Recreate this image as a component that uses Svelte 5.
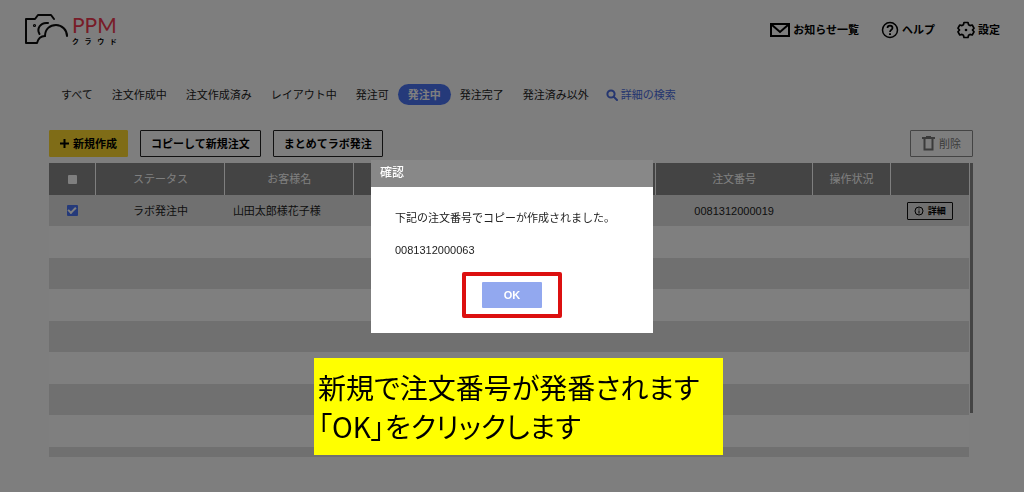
<script>
  const tabs = ['すべて', '注文作成中', '注文作成済み', 'レイアウト中', '発注可', '発注中', '発注完了', '発注済み以外'];
  let active = $state('発注中');
  let allChecked = $state(false);
  let checked = $state(true);
  let open = $state(true);
  const emptyRows = [1, 2, 3, 4, 5, 6, 7, 8];
</script>

<div class="page">
  <header>
    <a class="logo" href="#top" aria-label="PPMクラウド">
      <svg width="45" height="34" viewBox="0 0 45 34" fill="none" stroke="#0a0a0a" stroke-width="2" stroke-linecap="round" stroke-linejoin="round">
        <path d="M30 6 L27 2 H14 L11 6 H2 V30 H13 C14 26 17 23 21 23" />
        <path d="M21 23 C21 16 26 12 32 12 C38 12 43 17 43 23" />
        <path d="M15.500 21 C12.500 16 16 9 24 10" />
        <circle cx="10.500" cy="12.500" r="0.600" />
      </svg>
      <span class="brand">
        <span class="name">PPM</span>
        <span class="kana"><span>ク</span><span>ラ</span><span>ウ</span><span>ド</span></span>
      </span>
    </a>
    <nav class="menu">
      <a href="#news">
        <svg width="20" height="16" viewBox="0 0 20 16" fill="none" stroke="#000" stroke-width="2">
          <path d="M1 2 H19 V14 H1 Z M2 3 L10 10 L18 3" />
        </svg>
        お知らせ一覧
      </a>
      <a href="#help">
        <svg width="18" height="18" viewBox="0 0 18 18" fill="none" stroke="#000" stroke-width="1.500">
          <circle cx="9" cy="9" r="7.500" />
          <path d="M6.500 7 C6.500 3.800 11.500 3.800 11.500 7 C11.500 8.800 9 8.700 9 11" stroke-width="1.700" />
          <path d="M9 12.200 V14" stroke-width="1.900" />
        </svg>
        ヘルプ
      </a>
      <a href="#settings">
        <svg width="18" height="18" viewBox="0 0 18 18" fill="none" stroke="#000" stroke-width="1.700" stroke-linejoin="round">
          <path d="M7 1.500 H11 L11.600 3.800 L13 4.600 L15.200 4 L17 7.200 L15.500 9 L17 10.800 L15.200 14 L13 13.400 L11.600 14.200 L11 16.500 H7 L6.400 14.200 L5 13.400 L2.800 14 L1 10.800 L2.500 9 L1 7.200 L2.800 4 L5 4.600 L6.400 3.800 Z" />
          <circle cx="9" cy="9" r="1.300" fill="#000" stroke="none" />
        </svg>
        設定
      </a>
    </nav>
  </header>

  <main>
    <nav class="tabs">
      {#each tabs as tab}
        <button class:active={tab === active} onclick={() => (active = tab)}>{tab}</button>
      {/each}
      <a class="search" href="#search">
        <svg width="12" height="12" viewBox="0 0 12 12" fill="none" stroke="currentColor" stroke-width="2">
          <circle cx="5" cy="5" r="3.600" />
          <path d="M7.600 7.600 L11 11" stroke-linecap="round" />
        </svg>
        詳細の検索
      </a>
    </nav>

    <div class="toolbar">
      <button class="new">
        <svg width="9" height="9" viewBox="0 0 9 9" stroke="#000" stroke-width="2"><path d="M4.500 0 V9 M0 4.500 H9" /></svg>
        新規作成
      </button>
      <button>コピーして新規注文</button>
      <button>まとめてラボ発注</button>
      <button class="delete">
        <svg width="13" height="15" viewBox="0 0 13 15" fill="none" stroke="currentColor" stroke-width="2">
          <path d="M2.500 3 V13.500 H10.500 V3 M0 2 H13" />
          <path d="M4 0.500 H9" stroke-width="1" />
        </svg>
        削除
      </button>
    </div>

    <div class="list">
      <div class="scroller">
        <table>
          <colgroup>
            <col class="c-check" /><col class="c-text" /><col class="c-text" /><col class="c-mid" /><col class="c-mid" /><col class="c-num" /><col class="c-op" /><col class="c-op" />
          </colgroup>
          <thead>
            <tr>
              <th><input type="checkbox" aria-label="すべて選択" bind:checked={allChecked} /></th>
              <th>ステータス</th>
              <th>お客様名</th>
              <th></th>
              <th></th>
              <th>注文番号</th>
              <th>操作状況</th>
              <th></th>
            </tr>
          </thead>
          <tbody>
            <tr>
              <td><input type="checkbox" aria-label="選択" bind:checked={checked} /></td>
              <td>ラボ発注中</td>
              <td class="customer">山田太郎様花子様</td>
              <td></td>
              <td></td>
              <td>0081312000019</td>
              <td></td>
              <td>
                <button class="detail">
                  <svg width="10" height="10" viewBox="0 0 10 10" fill="none" stroke="#000">
                    <circle cx="5" cy="5" r="4" />
                    <path d="M5 4.500 V7.500 M5 2.500 V3.500" />
                  </svg>
                  詳細
                </button>
              </td>
            </tr>
            {#each emptyRows as row (row)}
              <tr><td colspan="8"></td></tr>
            {/each}
          </tbody>
        </table>
      </div>
      <div class="bar"></div>
    </div>
  </main>
</div>

{#if open}
  <div class="overlay">
    <div class="dialog" role="dialog" aria-modal="true" aria-labelledby="dialog-title">
      <h2 id="dialog-title">確認</h2>
      <div class="body">
        <p>下記の注文番号でコピーが作成されました。</p>
        <p>0081312000063</p>
        <div class="mark">
          <button class="ok" onclick={() => (open = false)}>OK</button>
        </div>
      </div>
    </div>
    <div class="note">新規で注文番号が発番されます<br />「OK」をクリックします</div>
  </div>
{/if}

<style>
  :global(body) {
    background: #fcfcfc;
  }

  .page,
  .overlay {
    font-family: "Liberation Sans", "Noto Sans CJK JP", sans-serif;
    font-size: 11px;
    line-height: 16px;
    color: #222;
  }

  button {
    font: inherit;
    color: inherit;
    cursor: pointer;
  }

  a {
    color: inherit;
    text-decoration: none;
  }

  svg {
    flex: none;
  }

  header {
    display: flex;
    justify-content: space-between;
    align-items: center;
    height: 60px;
    padding: 0 24px;
  }

  .logo {
    display: flex;
    gap: 3px;
  }

  .brand {
    display: flex;
    flex-direction: column;
  }

  .name {
    font-family: Lato, sans-serif;
    font-size: 21px;
    line-height: 24px;
    color: #f03850;
  }

  .kana {
    display: flex;
    justify-content: space-between;
    font-size: 7px;
    line-height: 10px;
    font-weight: bold;
    color: #000;
  }

  .menu {
    display: flex;
    gap: 22px;
    font-weight: bold;
    color: #000;
  }

  .menu a {
    display: flex;
    align-items: center;
    gap: 3px;
  }

  main {
    padding: 24px 51px 0 49px;
  }

  .tabs {
    display: flex;
    align-items: center;
    padding-left: 2px;
  }

  .tabs button {
    border: 0;
    background: none;
    height: 21px;
    padding: 0 10px;
    margin-right: -1px;
    border-radius: 11px;
    white-space: nowrap;
  }

  .tabs .active {
    background: #4a74f4;
    color: #fff;
    font-weight: bold;
  }

  .search {
    display: flex;
    align-items: center;
    gap: 3px;
    margin-left: 8px;
    color: #4a6ce0;
  }

  .toolbar {
    display: flex;
    gap: 12px;
    margin: 25px 0 6px;
  }

  .toolbar button {
    display: flex;
    align-items: center;
    justify-content: center;
    gap: 4px;
    height: 27px;
    padding: 0 10px;
    border: 1px solid #222;
    border-radius: 1px;
    background: none;
    color: #000;
    font-weight: bold;
    white-space: nowrap;
  }

  .toolbar .new {
    border-color: #ffd92e;
    background: #ffd92e;
  }

  .toolbar .delete {
    margin-left: auto;
    padding: 0 11px;
    border-color: #888;
    color: #777;
    font-weight: normal;
  }

  .list {
    display: flex;
    gap: 1px;
  }

  .scroller {
    flex: 1;
    max-height: 294px;
    overflow: hidden;
  }

  .bar {
    width: 3px;
    height: 250px;
    background: #888;
  }

  table {
    width: 100%;
    table-layout: fixed;
    border-collapse: collapse;
  }

  .c-check { width: 5.1%; }
  .c-text { width: 14%; }
  .c-mid { width: 16.4%; }
  .c-num { width: 17%; }
  .c-op { width: 8.5%; }

  th,
  td {
    padding: 0;
    text-align: center;
    font-weight: normal;
  }

  th {
    height: 32px;
    background: #888;
    color: #fff;
  }

  th + th {
    border-left: 1px solid #fff;
  }

  tbody tr {
    height: 32px;
    background: #fff;
  }

  tbody tr:nth-child(odd) {
    height: 31px;
    background: #e0e0e0;
  }

  td.customer {
    padding-left: 8px;
    text-align: left;
  }

  input {
    appearance: none;
    display: block;
    width: 11px;
    height: 11px;
    margin: 0 auto;
    border-radius: 1px;
    background: #fff;
  }

  th input {
    width: 9px;
    height: 9px;
  }

  input:checked {
    background: #4a74f4;
  }

  input:checked::after {
    content: "";
    display: block;
    width: 6px;
    height: 3px;
    margin: 2px auto 0;
    border: solid #fff;
    border-width: 0 0 2px 2px;
    transform: rotate(-45deg);
  }

  .detail {
    display: flex;
    align-items: center;
    gap: 4px;
    height: 18px;
    margin: 0 auto;
    padding: 0 6px;
    border: 1px solid #111;
    border-radius: 1px;
    background: none;
    color: #000;
    font-size: 9px;
    font-weight: bold;
  }

  .overlay {
    position: fixed;
    inset: 0;
    display: flex;
    align-items: center;
    justify-content: center;
    background: rgba(0, 0, 0, 0.5);
  }

  .dialog {
    width: 282px;
    background: #fff;
  }

  h2 {
    margin: 0;
    padding: 5px 9px;
    background: #888;
    color: #fff;
    font-size: 12px;
    line-height: 17px;
    font-weight: 500;
  }

  .body {
    padding: 23px 24px 15px;
  }

  .body p {
    margin: 0 0 16px;
    white-space: nowrap;
  }

  .mark {
    width: max-content;
    margin: -2px auto 0;
    padding: 6px 16px;
    border: 4px solid #dc1010;
    border-radius: 2px;
  }

  .ok {
    display: block;
    width: 60px;
    height: 26px;
    border: 0;
    border-radius: 1px;
    background: #92a8ef;
    color: #fff;
    font-weight: bold;
  }

  .note {
    position: absolute;
    top: 358px;
    left: calc(50% - 198px);
    box-sizing: border-box;
    width: 409px;
    padding: 10px 4px 9px;
    background: #ff0;
    color: #000;
    font-family: "Noto Sans CJK JP", sans-serif;
    font-size: 28px;
    line-height: 39px;
    font-feature-settings: "palt";
    white-space: nowrap;
  }
</style>
